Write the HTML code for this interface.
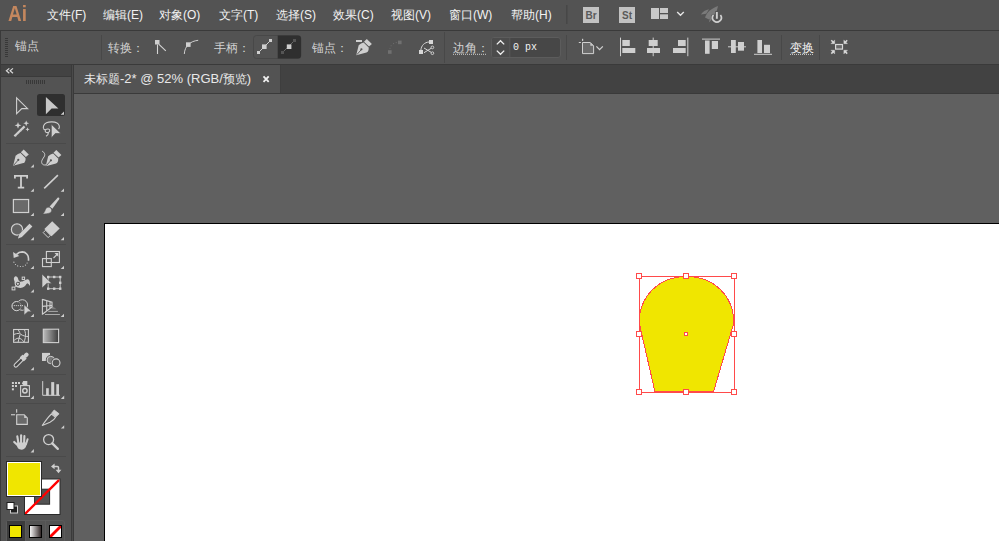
<!DOCTYPE html>
<html><head><meta charset="utf-8">
<style>
*{margin:0;padding:0;box-sizing:border-box}
html,body{width:999px;height:541px;overflow:hidden;background:#393939;font-family:"Liberation Sans",sans-serif;color:#e6e6e6}
.a{position:absolute;white-space:nowrap;z-index:2}
.bg{position:absolute;z-index:0}
.mi{top:7.5px;font-size:12px;line-height:15px;color:#f2f2f2}
.ct{font-size:12px;line-height:15px;color:#d2d2d2}
#ov{position:absolute;left:0;top:0;z-index:1}
</style></head><body>
<!-- backgrounds -->
<div class="bg" style="left:0;top:0;width:999px;height:30px;background:#535353"></div>
<div class="bg" style="left:1px;top:31px;width:998px;height:33px;background:#535353"></div>
<div class="bg" style="left:1px;top:65px;width:70px;height:11px;background:#434343"></div>
<div class="bg" style="left:1px;top:77px;width:70px;height:464px;background:#535353"></div>
<div class="bg" style="left:72px;top:65px;width:1px;height:476px;background:#4a4a4a"></div>
<div class="bg" style="left:73px;top:65px;width:1px;height:476px;background:#3a3a3a"></div>
<div class="bg" style="left:74px;top:65px;width:925px;height:28px;background:#424242"></div>
<div class="bg" style="left:74px;top:65px;width:206px;height:28px;background:#535353"></div>
<div class="bg" style="left:74px;top:94px;width:925px;height:447px;background:#606060"></div>
<div class="bg" style="left:104px;top:223px;width:895px;height:318px;background:#fff;border-top:1px solid #000;border-left:1px solid #000"></div>

<!-- menu text -->
<div class="a" style="left:8px;top:1px;font-size:22px;font-weight:bold;color:#c4875e;transform:scaleX(0.86);transform-origin:0 0">Ai</div>
<div class="a mi" style="left:47px">文件(F)</div>
<div class="a mi" style="left:103px">编辑(E)</div>
<div class="a mi" style="left:159px">对象(O)</div>
<div class="a mi" style="left:219px">文字(T)</div>
<div class="a mi" style="left:276px">选择(S)</div>
<div class="a mi" style="left:333px">效果(C)</div>
<div class="a mi" style="left:391px">视图(V)</div>
<div class="a mi" style="left:449px">窗口(W)</div>
<div class="a mi" style="left:511px">帮助(H)</div>

<!-- control text -->
<div class="a ct" style="left:15px;top:39px">锚点</div>
<div class="a ct" style="left:108px;top:41px">转换：</div>
<div class="a ct" style="left:214px;top:41px">手柄：</div>
<div class="a ct" style="left:312px;top:41px">锚点：</div>
<div class="a ct" style="left:453px;top:41px">边角：</div>
<div class="a" style="left:513px;top:41px;font-family:'Liberation Mono',monospace;font-size:10px;line-height:13px;color:#f2f2f2">0 px</div>
<div class="a ct" style="left:790px;top:41px;font-family:'Liberation Serif',serif;color:#f2f2f2">变换</div>

<!-- tab -->
<div class="a" style="left:84px;top:71px;font-size:12px;line-height:15px;color:#e8e8e8">未标题<span style="font-size:13px">-2* @ 52% (RGB/</span>预览<span style="font-size:13px">)</span></div>

<svg id="ov" width="999" height="541" viewBox="0 0 999 541">

<!-- borders -->
<rect x="0" y="30" width="999" height="1" fill="#3a3a3a"/>
<rect x="0" y="31" width="1" height="33" fill="#3a3a3a"/>
<rect x="0" y="64" width="999" height="1" fill="#3a3a3a"/>
<rect x="0" y="65" width="1" height="476" fill="#3a3a3a"/>
<rect x="1" y="76" width="70" height="1" fill="#3a3a3a"/>
<rect x="71" y="65" width="1" height="476" fill="#3a3a3a"/>
<rect x="280" y="65" width="1" height="28" fill="#3e3e3e"/>
<rect x="74" y="93" width="925" height="1" fill="#3a3a3a"/>

<!-- control bar -->
<g fill="#383838"><rect x="5" y="38" width="3" height="1"/><rect x="5" y="40" width="3" height="1"/><rect x="5" y="42" width="3" height="1"/><rect x="5" y="44" width="3" height="1"/><rect x="5" y="46" width="3" height="1"/><rect x="5" y="48" width="3" height="1"/><rect x="5" y="50" width="3" height="1"/><rect x="5" y="52" width="3" height="1"/><rect x="5" y="54" width="3" height="1"/><rect x="5" y="56" width="3" height="1"/></g>
<g fill="#484848"><rect x="101" y="35" width="1" height="25"/><rect x="444" y="32" width="1" height="31"/><rect x="566" y="35" width="1" height="25"/><rect x="781" y="35" width="1" height="25"/><rect x="819" y="35" width="1" height="25"/></g>
<!-- convert corner -->
<rect x="155" y="40" width="4.5" height="4.5" fill="#cfcfcf"/>
<path d="M157.5,44.5 V54 M159,44.3 L165.8,50.9" stroke="#d4d4d4" stroke-width="1.1" fill="none"/>
<!-- convert smooth -->
<rect x="186" y="42.3" width="4.6" height="4.6" fill="#cfcfcf"/>
<path d="M184.3,54 C184.5,50 186,46.5 188.5,44.5 C191,42 194,40.8 198.2,40.3" stroke="#cfcfcf" stroke-width="1" fill="none"/>
<!-- handle buttons -->
<rect x="253.5" y="35.5" width="47.5" height="23" rx="3" fill="#535353" stroke="#484848" stroke-width="1"/>
<path d="M277.5,35.5 H298 A3,3 0 0 1 301,38.5 V55.5 A3,3 0 0 1 298,58.5 H277.5 Z" fill="#2f2f2f"/>
<rect x="277" y="35.5" width="1" height="23" fill="#484848"/>
<path d="M258.5,52.5 L270.5,40.5" stroke="#cfcfcf" stroke-width="1"/>
<rect x="257" y="51" width="3" height="3" fill="#cfcfcf"/>
<rect x="262" y="44.4" width="4.6" height="4.6" fill="#cfcfcf"/>
<rect x="269" y="39" width="3" height="3" fill="#cfcfcf"/>
<path d="M282.5,52.5 L294.5,40.5" stroke="#6a6a6a" stroke-width="1"/>
<rect x="281" y="51" width="3" height="3" fill="#555"/>
<rect x="286.8" y="44.4" width="4.6" height="4.6" fill="#cfcfcf"/>
<rect x="293" y="39" width="3" height="3" fill="#555"/>
<!-- pen minus -->
<rect x="356" y="40" width="6" height="2" fill="#cfcfcf"/>
<path d="M366.8,39 L371.9,43.9 L369,46.6 L364,41.8 Z" fill="#cfcfcf"/>
<path d="M363.6,42.6 L368.6,47.4 C369,49.6 368.3,51.3 366.5,52.6 L356.2,55.3 L358.7,45.2 C360.2,44 361.8,43.2 363.6,42.6 Z" fill="#cfcfcf"/>
<path d="M356.9,54.6 L361.3,49.6" stroke="#535353" stroke-width="0.9"/>
<circle cx="361.4" cy="49.3" r="1.1" fill="#535353"/>
<!-- disabled anchor -->
<g fill="#707070"><rect x="388" y="50.2" width="3.6" height="3.6"/><rect x="398" y="40.6" width="3.6" height="3.6"/><circle cx="390" cy="48.3" r="0.55"/><circle cx="391.1" cy="45.7" r="0.55"/><circle cx="393.6" cy="43.6" r="0.55"/><circle cx="396.2" cy="42.6" r="0.55"/></g>
<!-- scissors -->
<rect x="419" y="50" width="4" height="4" fill="#d6d6d6"/>
<rect x="429" y="40" width="4" height="4" fill="#d6d6d6"/>
<path d="M420.8,50.5 C421.2,45.5 424.5,42.2 429.2,42" fill="none" stroke="#d6d6d6" stroke-width="1"/>
<path d="M424,48 L431.3,52.4 M424,52.7 L431.3,48.2" stroke="#d6d6d6" stroke-width="1"/>
<circle cx="432.4" cy="47.4" r="1.35" fill="none" stroke="#d6d6d6" stroke-width="0.9"/>
<circle cx="432.4" cy="53.2" r="1.35" fill="none" stroke="#d6d6d6" stroke-width="0.9"/>
<!-- corner dotted underline -->
<path d="M453,54.3 H486" stroke="#d0d0d0" stroke-width="1" stroke-dasharray="1,1"/>
<!-- spinner field -->
<rect x="491.5" y="37.5" width="69" height="20" rx="2.5" fill="#474747" stroke="#5c5c5c" stroke-width="1"/>
<path d="M494,38 H509.3 V57 H494 A2,2 0 0 1 492,55 V40 A2,2 0 0 1 494,38 Z" fill="#4c4c4c"/>
<rect x="509.3" y="38" width="1" height="19" fill="#5a5a5a"/>
<path d="M496.8,44.4 L500.5,40.7 L504.2,44.4 M496.8,50.6 L500.5,54.3 L504.2,50.6" fill="none" stroke="#f0f0f0" stroke-width="1.3"/>
<!-- artboard icon -->
<rect x="582" y="38.8" width="1.2" height="2.1" fill="#d0d0d0"/>
<rect x="578.8" y="42" width="2.1" height="1" fill="#d0d0d0"/>
<path d="M582.5,42.5 H590.3 L593.6,45.8 V53.6 H582.5 Z" fill="#6a6a6a" stroke="#d0d0d0" stroke-width="1"/>
<path d="M590.3,42.5 V45.8 H593.6 Z" fill="#c8c8c8"/>
<path d="M596.4,46.4 L599.6,49.6 L602.8,46.4" fill="none" stroke="#d0d0d0" stroke-width="1.3"/>
<!-- align -->
<g fill="#cfcfcf">
<rect x="620" y="37.6" width="1" height="18.6"/><rect x="622.3" y="40" width="7.5" height="6"/><rect x="622.3" y="48" width="13" height="5"/>
<rect x="652.7" y="37.6" width="1" height="18.6"/><rect x="648.7" y="40" width="9" height="6"/><rect x="647" y="48" width="13" height="5"/>
<rect x="687.3" y="37.6" width="1" height="18.6"/><rect x="678" y="40" width="7.7" height="6"/><rect x="673" y="48" width="12.7" height="5"/>
<rect x="702" y="38.6" width="18" height="1"/><rect x="705" y="40.5" width="4.6" height="13.3"/><rect x="711.8" y="41" width="6.2" height="8"/>
<rect x="728" y="46.3" width="18" height="1"/><rect x="731" y="40" width="4.8" height="13"/><rect x="738" y="42" width="6" height="8.7"/>
<rect x="754" y="53.8" width="18" height="1"/><rect x="757.4" y="40" width="4.6" height="13"/><rect x="764" y="44.8" width="6" height="8.2"/>
</g>
<!-- transform dotted underline -->
<path d="M790,54.4 H813.5" stroke="#d0d0d0" stroke-width="1" stroke-dasharray="1,1"/>
<!-- isolate icon -->
<rect x="835.6" y="44.5" width="6.9" height="4.6" fill="#6a6a6a" stroke="#d8d8d8" stroke-width="1.2"/>
<g fill="#d8d8d8" stroke="#d8d8d8">
<path d="M831.3,40.3 L834,43" stroke-width="1.5"/><path d="M834.7,43.7 H830.9 L834.7,39.9 Z" stroke-width="0.3"/>
<path d="M847.2,40.3 L844.5,43" stroke-width="1.5"/><path d="M843.8,43.7 H847.6 L843.8,39.9 Z" stroke-width="0.3"/>
<path d="M831.3,53.6 L834,50.9" stroke-width="1.5"/><path d="M834.7,50.2 H830.9 L834.7,54 Z" stroke-width="0.3"/>
<path d="M847.2,53.6 L844.5,50.9" stroke-width="1.5"/><path d="M843.8,50.2 H847.6 L843.8,54 Z" stroke-width="0.3"/>
</g>
<!-- tab close -->
<path d="M263.5,76.3 L268.7,81.8 M268.7,76.3 L263.5,81.8" stroke="#f0f0f0" stroke-width="1.8"/>
<!-- shape -->
<path d="M639.2,323 C639.2,296.03 659.07,276.5 686.5,276.5 C713.93,276.5 733.8,296.03 733.8,323 L713.6,391.5 L654.9,391.5 Z" fill="#f0e600" stroke="#ff4a4a" stroke-width="1" shape-rendering="crispEdges"/>
<g shape-rendering="crispEdges">
<rect x="639.5" y="276.5" width="95" height="116" fill="none" stroke="#ff4a4a" stroke-width="1"/>
<g fill="#fff" stroke="#ff4a4a" stroke-width="1">
<rect x="636.5" y="273.5" width="5" height="5"/><rect x="683.5" y="273.5" width="5" height="5"/><rect x="731.5" y="273.5" width="5" height="5"/>
<rect x="636.5" y="331.5" width="5" height="5"/><rect x="731.5" y="331.5" width="5" height="5"/>
<rect x="636.5" y="389.5" width="5" height="5"/><rect x="683.5" y="389.5" width="5" height="5"/><rect x="731.5" y="389.5" width="5" height="5"/>
<rect x="684.5" y="332.5" width="3" height="3"/>
</g></g>
<!-- ===== TOOLS ===== -->
<path d="M9.3,68.4 L6.4,70.8 L9.3,73.2 M13,68.4 L10.1,70.8 L13,73.2" fill="none" stroke="#d8d8d8" stroke-width="1.2"/>
<g fill="#383838"><rect x="26" y="80" width="1" height="4"/><rect x="28" y="80" width="1" height="4"/><rect x="30" y="80" width="1" height="4"/><rect x="32" y="80" width="1" height="4"/><rect x="34" y="80" width="1" height="4"/><rect x="36" y="80" width="1" height="4"/><rect x="38" y="80" width="1" height="4"/><rect x="40" y="80" width="1" height="4"/><rect x="42" y="80" width="1" height="4"/><rect x="44" y="80" width="1" height="4"/></g>
<g fill="#4a4a4a" shape-rendering="crispEdges"><rect x="6" y="143" width="60" height="1"/><rect x="6" y="244" width="60" height="1"/><rect x="6" y="321" width="60" height="1"/><rect x="6" y="374" width="60" height="1"/><rect x="6" y="403" width="60" height="1"/><rect x="6" y="456" width="60" height="1"/></g>
<!-- corner triangles -->
<g fill="#cfcfcf">
<path d="M60.7,114.8 H64 V111.5 Z"/>
<path d="M30.6,167.6 H33.9 V164.3 Z"/>
<path d="M30.6,191.7 H33.9 V188.4 Z"/><path d="M60.7,191.7 H64 V188.4 Z"/>
<path d="M30.6,216 H33.9 V212.7 Z"/><path d="M60.7,216 H64 V212.7 Z"/>
<path d="M30.6,240.3 H33.9 V237 Z"/><path d="M60.7,240.3 H64 V237 Z"/>
<path d="M30.6,269 H33.9 V265.7 Z"/><path d="M60.7,269 H64 V265.7 Z"/>
<path d="M30.6,292.6 H33.9 V289.3 Z"/>
<path d="M30.6,317 H33.9 V313.7 Z"/><path d="M60.7,317 H64 V313.7 Z"/>
<path d="M30.6,370.2 H33.9 V366.9 Z"/>
<path d="M30.6,398.9 H33.9 V395.6 Z"/><path d="M60.9,398.9 H64.2 V395.6 Z"/>
<path d="M60.9,428.5 H64.2 V425.2 Z"/>
<path d="M30.6,452.4 H33.9 V449.1 Z"/>
</g>
<!-- direct selection -->
<path d="M16.6,97.8 L27.6,108.6 L21.8,108.6 L16.6,113.6 Z" fill="none" stroke="#cfcfcf" stroke-width="1.1"/>
<!-- selection (active) -->
<rect x="37" y="94" width="28" height="22" rx="2.5" fill="#2f2f2f"/>
<path d="M60.7,114.8 H64 V111.5 Z" fill="#cfcfcf"/>
<path d="M45.9,97.1 L58.4,108.6 L51.6,108.6 L45.9,114.2 Z" fill="#c8c8c8"/>
<!-- magic wand -->
<path d="M14.4,136.3 L24.6,126.4" stroke="#cfcfcf" stroke-width="2.2"/>
<path d="M15.6,135.8 L16.5,136.4 M17.3,134.1 L18.2,134.7 M19,132.4 L19.9,133 M20.7,130.8 L21.6,131.4 M22.4,129.1 L23.3,129.7" stroke="#9a9a9a" stroke-width="0.5"/>
<path d="M18.00,121.90 L18.92,124.38 L21.40,125.30 L18.92,126.22 L18.00,128.70 L17.08,126.22 L14.60,125.30 L17.08,124.38 Z" fill="#cfcfcf"/>
<path d="M26.20,120.40 L27.01,122.49 L29.10,123.30 L27.01,124.11 L26.20,126.20 L25.39,124.11 L23.30,123.30 L25.39,122.49 Z" fill="#cfcfcf"/>
<path d="M27.50,127.20 L28.10,128.70 L29.60,129.30 L28.10,129.90 L27.50,131.40 L26.90,129.90 L25.40,129.30 L26.90,128.70 Z" fill="#cfcfcf"/>
<!-- lasso -->
<path d="M58.6,129.1 C60,127 59.5,124.5 57,123 C54.5,121.6 49.5,121.4 46.5,122.8 C43.8,124 42.8,126.8 43.6,128.8" fill="none" stroke="#cfcfcf" stroke-width="1.1"/>
<path d="M43.6,128.8 C44.5,130.6 46,129.5 47.5,129 C49,128.6 50,129.8 49.6,131.2 C49.2,132.6 47.3,133 46,132.3 C44.6,131.5 45,129.8 46.5,129.2 M48.4,132.8 C48.5,134.3 47.5,135.5 46,136.3" fill="none" stroke="#cfcfcf" stroke-width="1.05"/>
<path d="M51.3,124.2 L60.9,133.5 L55.3,133.5 L51.3,138 Z" fill="#cfcfcf" stroke="#535353" stroke-width="0.7"/>
<!-- pen -->
<g transform="translate(-343.1,110.5)">
<path d="M366.8,39 L371.9,43.9 L369,46.6 L364,41.8 Z" fill="#cfcfcf"/>
<path d="M363.6,42.6 L368.6,47.4 C369,49.6 368.3,51.3 366.5,52.6 L356.2,55.3 L358.7,45.2 C360.2,44 361.8,43.2 363.6,42.6 Z" fill="#cfcfcf"/>
<path d="M356.9,54.6 L361.3,49.6" stroke="#535353" stroke-width="0.9"/>
<circle cx="361.4" cy="49.3" r="1.1" fill="#535353"/>
</g>
<!-- curvature pen -->
<g transform="translate(-310.5,111)">
<path d="M366.8,39 L371.9,43.9 L369,46.6 L364,41.8 Z" fill="#cfcfcf"/>
<path d="M363.6,42.6 L368.6,47.4 C369,49.6 368.3,51.3 366.5,52.6 L356.2,55.3 L358.7,45.2 C360.2,44 361.8,43.2 363.6,42.6 Z" fill="#cfcfcf"/>
<path d="M356.9,54.6 L361.3,49.6" stroke="#535353" stroke-width="0.9"/>
<circle cx="361.4" cy="49.3" r="1.1" fill="#535353"/>
</g>
<path d="M42.2,151.2 C44.5,152.5 45.6,154.5 44,157 C42,159.8 40.8,162 42.3,164 C43,165 44.5,165.2 46,164.8" fill="none" stroke="#cfcfcf" stroke-width="1"/>
<!-- type -->
<path d="M14.9,178.6 V175.9 H27.1 V178.6 M21,176 V187.5 M17.8,187.6 H24.2" fill="none" stroke="#cfcfcf" stroke-width="1.8"/>
<!-- line -->
<path d="M44.2,188.3 L57.9,175.2" stroke="#cfcfcf" stroke-width="1.6"/>
<!-- rectangle -->
<rect x="13.4" y="199.5" width="15.2" height="13" fill="#6a6a6a" stroke="#d0d0d0" stroke-width="1.2"/>
<!-- brush -->
<path d="M57.45,197.9 L59.15,199.3 L52.4,208.7 L49.6,206.4 Z" fill="#cfcfcf"/>
<circle cx="58.3" cy="198.6" r="1.1" fill="#cfcfcf"/>
<path d="M48.2,207.2 C50.3,207 51.9,208.7 51.6,210.7 C51.2,212.8 48.6,213.9 42.8,213.9 C44.6,212.4 44.9,210.9 45.6,209.3 C46.2,208 47,207.3 48.2,207.2 Z" fill="#cfcfcf" stroke="#535353" stroke-width="0.5"/>
<!-- shaper -->
<circle cx="17" cy="229.5" r="5.6" fill="#636363" stroke="#cfcfcf" stroke-width="1.2"/>
<path d="M29.5,223.7 L32.3,226.5 L21.8,237 L18,238.4 L19.2,234.4 Z" fill="#cfcfcf" stroke="#535353" stroke-width="0.9" stroke-linejoin="round"/>
<path d="M29.5,223.7 L32.3,226.5 L21.8,237 L18,238.4 L19.2,234.4 Z" fill="#cfcfcf"/>
<!-- eraser -->
<path d="M52.2,221.2 L59.7,228.4 L51.6,236.2 L44.4,228.9 Z" fill="#cfcfcf"/>
<path d="M45.6,230.2 L50.5,235.2 L48.2,237.6 L43.2,232.6 Z" fill="none" stroke="#cfcfcf" stroke-width="1"/>
<!-- rotate -->
<path d="M16.3,254.6 C18,252.8 20.2,251.9 22.3,251.9 C25.8,252 28.5,255 28.5,258.5 L28.5,260.8" fill="none" stroke="#cfcfcf" stroke-width="1.6"/>
<path d="M13.1,251.9 L19.3,256 L13.7,257.9 Z" fill="#cfcfcf"/>
<g fill="#cfcfcf"><circle cx="27.1" cy="263" r="0.6"/><circle cx="25.5" cy="265.1" r="0.6"/><circle cx="23" cy="266.3" r="0.6"/><circle cx="20.4" cy="266.5" r="0.6"/><circle cx="17.7" cy="265.9" r="0.6"/><circle cx="15.5" cy="264.5" r="0.6"/><circle cx="13.9" cy="262.2" r="0.6"/></g>
<!-- scale -->
<rect x="46.4" y="251.5" width="13" height="11" fill="none" stroke="#d0d0d0" stroke-width="1.1"/>
<rect x="42.5" y="258.6" width="8.8" height="8" fill="none" stroke="#d0d0d0" stroke-width="1.1"/>
<path d="M53.5,258 L57.5,254" stroke="#d0d0d0" stroke-width="1.1"/>
<path d="M54.5,253 H58.3 V256.8 Z" fill="#d0d0d0"/>
<!-- puppet warp -->
<path d="M13.9,279.6 C13.6,277.5 14.6,276.2 15.9,276.2 C17.4,276.3 18.2,278.3 18.5,280.2 C19.8,281.5 21.2,281.8 23,281.2 C24.8,280.6 26.3,279.2 27.8,279.3 C29.6,279.5 30.3,282.5 30,285.8 C29.2,285 28.5,283.4 27.2,283.2 C26,284.5 24.8,286.8 22.5,287.6 C20.2,288.2 17.5,287.8 16.2,286.8 C14.8,285.6 14.5,283.5 14.6,282 C14.6,281.2 14.1,280.6 13.9,279.6 Z" fill="#cfcfcf"/>
<path d="M13.5,288.5 L17.9,283.8" stroke="#cfcfcf" stroke-width="0.9"/>
<path d="M17.9,283.8 L23.4,278.3" stroke="#535353" stroke-width="0.9"/>
<rect x="12.1" y="287.1" width="2.8" height="2.8" fill="#535353" stroke="#cfcfcf" stroke-width="1"/>
<circle cx="17.9" cy="283.8" r="1.6" fill="#cfcfcf" stroke="#3e3e3e" stroke-width="0.9"/>
<rect x="22.2" y="277.1" width="2.4" height="2.4" fill="#535353" stroke="#cfcfcf" stroke-width="1"/>
<!-- free transform -->
<path d="M48.2,278 V288.7 H60.2 V277 H48.2" fill="none" stroke="#cfcfcf" stroke-width="0.9"/>
<path d="M42,274 L51.8,283.4 L46.8,283.4 L42,288 Z" fill="#cfcfcf" stroke="#535353" stroke-width="0.6"/>
<g fill="#cfcfcf"><rect x="47" y="287.5" width="2.4" height="2.4"/><rect x="53" y="287.5" width="2.4" height="2.4"/><rect x="59" y="287.5" width="2.4" height="2.4"/><rect x="59" y="281.6" width="2.4" height="2.4"/><rect x="59" y="275.8" width="2.4" height="2.4"/><rect x="53" y="275.8" width="2.4" height="2.4"/><rect x="47" y="275.8" width="2.4" height="2.4"/></g>
<!-- shape builder -->
<defs><mask id="m2"><rect x="0" y="290" width="80" height="40" fill="#fff"/><circle cx="22.3" cy="305" r="5.3" fill="#000"/></mask></defs>
<circle cx="22.3" cy="305" r="5.3" fill="none" stroke="#cfcfcf" stroke-width="1"/>
<circle cx="16.6" cy="306.1" r="4.6" fill="#535353" stroke="#858585" stroke-width="1"/>
<circle cx="16.6" cy="306.1" r="4.6" fill="none" stroke="#cfcfcf" stroke-width="1" mask="url(#m2)"/>
<g fill="#dcdcdc"><circle cx="14.3" cy="305.6" r="0.6"/><circle cx="16.3" cy="305.6" r="0.6"/><circle cx="18.3" cy="305.6" r="0.6"/><circle cx="20.5" cy="305.6" r="0.6"/><circle cx="22.4" cy="305.6" r="0.6"/></g>
<path d="M24,304.5 L31.8,311.8 L27.9,311.8 L24,315.2 Z" fill="#cfcfcf" stroke="#535353" stroke-width="0.7"/>
<!-- perspective grid -->
<path d="M56.7,309.2 L51.5,305.5 L51.5,309.2 Z" fill="#7a7a7a"/>
<path d="M42.4,299 V314.7 M42.4,299.4 L52,302.2 V307 L42.4,314.3 M46.7,300.6 V311 M50,301.6 V308.5 M42.4,306.4 L52,305.2" fill="none" stroke="#cfcfcf" stroke-width="1.1"/>
<path d="M45,314.5 H59.9 M48.3,311.4 H57.9" fill="none" stroke="#ababab" stroke-width="1"/>
<!-- mesh -->
<rect x="13.6" y="329.5" width="14.8" height="12.8" fill="#535353" stroke="#d0d0d0" stroke-width="1.1"/>
<path d="M18,329.5 C19.5,331.5 19.8,333.5 21,334.5 C22.5,335.5 25.5,336.5 28.2,336.6 M24.4,329.5 C25.5,332 25.8,335 25.3,337.5 C25,339.5 24.5,341 24,342.3 M13.7,334.6 C15.5,333.8 17.5,333.2 19.5,333.5 M20.2,334.2 C19.5,336.5 18.6,339.5 18.1,342.3 M13.7,340.8 C15,339.5 16.5,338.3 18.6,338.2 C20.5,338.3 22.5,339.8 23.8,341.8" fill="none" stroke="#cfcfcf" stroke-width="1"/>
<!-- gradient -->
<defs><linearGradient id="gt" x1="0" x2="1"><stop offset="0" stop-color="#bdbdbd"/><stop offset="1" stop-color="#3c3c3c"/></linearGradient>
<linearGradient id="gs" x1="0" x2="1"><stop offset="0" stop-color="#ffffff"/><stop offset="1" stop-color="#2a2020"/></linearGradient></defs>
<rect x="43.3" y="329.2" width="15.3" height="13.4" fill="url(#gt)" stroke="#d0d0d0" stroke-width="1.1"/>
<!-- eyedropper -->
<g transform="translate(14.2,367) rotate(-45)">
<rect x="0.6" y="-1.7" width="11" height="3.4" rx="1.7" fill="#474747" stroke="#d0d0d0" stroke-width="1.1"/>
<rect x="10.5" y="-2.9" width="4.5" height="5.8" rx="0.8" fill="#cfcfcf"/>
<rect x="14" y="-2.1" width="5.6" height="4.2" rx="2.1" fill="#cfcfcf"/>
</g>
<!-- blend -->
<rect x="42" y="352.9" width="8" height="8.1" fill="#cfcfcf"/>
<circle cx="50.8" cy="360" r="3.7" fill="#7a7a7a" stroke="#535353" stroke-width="2.6"/>
<circle cx="50.8" cy="360" r="3.7" fill="#7a7a7a" stroke="#cfcfcf" stroke-width="1"/>
<circle cx="56.1" cy="362.8" r="3.9" fill="#535353" stroke="#535353" stroke-width="2.6"/>
<circle cx="56.1" cy="362.8" r="3.9" fill="#535353" stroke="#d0d0d0" stroke-width="1.1"/>
<!-- symbol sprayer -->
<g fill="#cfcfcf"><rect x="11.9" y="382" width="2" height="2"/><rect x="15" y="382" width="2" height="2"/><rect x="18" y="382" width="2" height="2"/><rect x="11.9" y="385" width="2" height="2"/><rect x="15" y="385" width="2" height="2"/><rect x="11.9" y="388.3" width="2" height="2"/>
<path d="M23.2,381 H27.3 V385 H23.2 L21.9,383.5 Z"/></g>
<rect x="20.6" y="385.6" width="8.8" height="10.8" fill="none" stroke="#d0d0d0" stroke-width="1.1"/>
<circle cx="24.9" cy="390.7" r="2.2" fill="none" stroke="#d0d0d0" stroke-width="1.5"/>
<!-- graph -->
<path d="M42.7,381.1 V395.3 H59.9" fill="none" stroke="#cfcfcf" stroke-width="1"/>
<g fill="#cfcfcf"><rect x="46.1" y="388.2" width="2.7" height="7.2"/><rect x="51.2" y="382.1" width="3" height="13.3"/><rect x="56.3" y="384.2" width="2.7" height="11.2"/></g>
<!-- artboard tool -->
<rect x="16.1" y="409.2" width="1.1" height="3.5" fill="#d0d0d0"/>
<rect x="11" y="414.2" width="4.1" height="1.1" fill="#d0d0d0"/>
<path d="M16.7,414.8 H24.2 L27.3,417.9 V424.4 H16.7 Z" fill="#6a6a6a" stroke="#d0d0d0" stroke-width="1.1"/>
<path d="M24.2,414.8 V417.9 H27.3 Z" fill="#c8c8c8"/>
<!-- slice -->
<path d="M54.2,410 L59.1,413.8 L56,416.8 L51.6,413.3 Z" fill="#cfcfcf" stroke="#cfcfcf" stroke-width="0.8" stroke-linejoin="round"/>
<path d="M51.4,414 L55.6,417.3 C54.5,419.6 52.8,420.8 50,422.2 L42.3,425.4 C44.8,421.8 47.5,417.8 51.4,414 Z" fill="#535353" stroke="#cfcfcf" stroke-width="1.05" stroke-linejoin="round"/>
<!-- hand -->
<g stroke="#cfcfcf" stroke-linecap="round" fill="none">
<path d="M17.3,436.4 L18.4,443" stroke-width="2.1"/>
<path d="M21.1,435.3 L21.1,443" stroke-width="2.1"/>
<path d="M24.4,436.1 L24.1,443" stroke-width="2.1"/>
<path d="M27.6,439.3 L25.9,444.5" stroke-width="2"/>
<path d="M14.2,441.9 L18,445.6" stroke-width="2.1"/>
</g>
<path d="M16.8,442.5 L26.6,442.5 C26.6,446.2 25.3,449.6 21.5,449.7 C18.6,449.7 17.2,447.8 16.8,445 Z" fill="#cfcfcf"/>
<!-- zoom -->
<circle cx="48.6" cy="439.6" r="5" fill="none" stroke="#d0d0d0" stroke-width="1.3"/>
<path d="M52.3,443.4 L57.8,448.9" stroke="#d0d0d0" stroke-width="2.3" stroke-linecap="round"/>
<!-- fill / stroke -->
<rect x="24.5" y="479" width="35.5" height="35.5" fill="#fff" stroke="#2a2a2a" stroke-width="1"/>
<rect x="34.6" y="489.2" width="15" height="15" fill="#535353" stroke="#2a2a2a" stroke-width="1"/>
<defs><clipPath id="cs"><rect x="25" y="479.5" width="34.5" height="34.5"/></clipPath></defs><path d="M24.5,514.5 L60,479" stroke="#ff0000" stroke-width="2.3" clip-path="url(#cs)"/>
<rect x="6.5" y="461.5" width="35" height="35" fill="#fff" stroke="#2a2a2a" stroke-width="1"/>
<rect x="8" y="463" width="32" height="32" fill="#f0e600"/>
<path d="M53.5,466.4 H57.3 Q58.5,466.4 58.5,467.6 V470.3" fill="none" stroke="#cfcfcf" stroke-width="1.5"/>
<path d="M51,466.4 L54.6,463.5 V469.3 Z M58.5,473.3 L55.6,469.8 H61.4 Z" fill="#cfcfcf"/>
<rect x="10.5" y="506" width="7" height="7" fill="#1e1e1e" stroke="#cfcfcf" stroke-width="1"/>
<rect x="7" y="502.5" width="7" height="7" fill="#fff" stroke="#1e1e1e" stroke-width="1"/>
<!-- bottom buttons -->
<rect x="6.5" y="520.5" width="58" height="22" rx="2.5" fill="none" stroke="#5c5c5c" stroke-width="1"/>
<rect x="7" y="521" width="18" height="20" fill="#3c3c3c"/>
<rect x="25" y="521" width="1" height="20" fill="#5a5a5a"/>
<rect x="45" y="521" width="1" height="20" fill="#5a5a5a"/>
<g shape-rendering="crispEdges">
<rect x="9.5" y="525.5" width="12" height="12" fill="#f0e600" stroke="#000" stroke-width="1"/>
<rect x="29.5" y="525.5" width="12" height="12" fill="url(#gs)" stroke="#000" stroke-width="1"/>
<rect x="49.5" y="525.5" width="12" height="12" fill="#fff" stroke="#000" stroke-width="1"/>
</g>
<defs><clipPath id="cn"><rect x="50" y="526" width="11" height="11"/></clipPath></defs><path d="M49,538 L62,525" stroke="#ff0000" stroke-width="2.8" clip-path="url(#cn)"/>
<!-- ===== END TOOLS ===== -->
<!-- menubar icons -->
<rect x="566" y="5" width="1.5" height="19" fill="#474747"/>
<rect x="583" y="7" width="16" height="16" fill="#c2c2c2"/>
<text x="591" y="18.9" font-family="Liberation Sans" font-weight="bold" font-size="10" fill="#5a5a5a" text-anchor="middle">Br</text>
<rect x="619" y="7" width="16" height="16" fill="#c2c2c2"/>
<text x="627" y="18.9" font-family="Liberation Sans" font-weight="bold" font-size="10" fill="#5a5a5a" text-anchor="middle">St</text>
<rect x="651" y="8" width="8" height="11" fill="#c8c8c8"/>
<rect x="660" y="8" width="8" height="5" fill="#c8c8c8"/>
<rect x="660" y="14.3" width="8" height="4.7" fill="#c8c8c8"/>
<path d="M677.2,12 L680.5,15.2 L683.8,12" fill="none" stroke="#e6e6e6" stroke-width="1.4"/>
<path d="M705,17.5 C706.5,12.5 711,8.5 718,6 C717,12.5 713.5,16.5 709,19.5 Z" fill="#7a7a7a"/>
<path d="M700.8,14.6 C702.5,11.8 705.5,9.8 709,9.2 L706.2,13.8 Z" fill="#7a7a7a"/>
<path d="M708.8,22.6 L710.2,17.2 L713,18.4 Z" fill="#7a7a7a"/>
<path d="M713.4,14.9 A4.4,4.4 0 1 0 720.4,14.9" fill="none" stroke="#535353" stroke-width="3.2"/>
<path d="M713.4,14.9 A4.4,4.4 0 1 0 720.4,14.9" fill="none" stroke="#d0d0d0" stroke-width="1.7"/>
<rect x="715" y="11.2" width="3.6" height="8.4" fill="#535353"/>
<rect x="715.9" y="12" width="1.9" height="6.8" fill="#d0d0d0"/>
</svg>
</body></html>
